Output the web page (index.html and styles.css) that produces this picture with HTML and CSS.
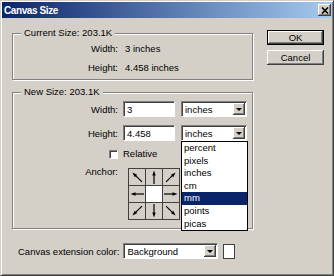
FILE: index.html
```html
<!DOCTYPE html>
<html lang="en">
<head>
  <meta charset="UTF-8" />
  <meta name="viewport" content="width=device-width, initial-scale=1.0"/>
  <title>Canvas Size</title>
  <link rel="stylesheet" href="styles.css">
</head>
<body>
  <div class="window">
    <div class="titlebar">
      <span class="title">Canvas Size</span>
      <span class="close">
        <svg width="8" height="7" viewBox="0 0 8 7"><path d="M1 0.5L7 6.5M7 0.5L1 6.5" stroke="#000" stroke-width="1.6"/></svg>
      </span>
    </div>

    <div class="content">
      <div class="left">
        <fieldset class="group current">
          <legend>Current Size: 203.1K</legend>
          <div class="row">
            <span class="label">Width:</span>
            <span>3 inches</span>
          </div>
          <div class="row">
            <span class="label">Height:</span>
            <span>4.458 inches</span>
          </div>
        </fieldset>

        <fieldset class="group new">
          <legend>New Size: 203.1K</legend>
          <div class="row first">
            <span class="label">Width:</span>
            <div class="input">3</div>
            <div class="select unit"><span>inches</span><span class="arrow"></span></div>
          </div>
          <div class="row second">
            <span class="label">Height:</span>
            <div class="input">4.458</div>
            <div class="select unit open">
              <span>inches</span><span class="arrow"></span>
              <ul class="dropdown">
                <li>percent</li>
                <li>pixels</li>
                <li>inches</li>
                <li>cm</li>
                <li class="selected">mm</li>
                <li>points</li>
                <li>picas</li>
              </ul>
            </div>
          </div>
          <div class="row relative">
            <span class="label"><span class="checkbox"></span></span>
            <span>Relative</span>
          </div>
          <div class="row anchor">
            <span class="label">Anchor:</span>
            <div class="anchor-grid">
              <div class="cell"><svg viewBox="0 0 16 16"><g transform="rotate(-45 8 8)"><path d="M8 15V5" stroke="#000" stroke-width="1.2"/><path d="M8 1.5L6.3 6.5H9.7Z"/></g></svg></div>
              <div class="cell"><svg viewBox="0 0 16 16"><path d="M8 15V5" stroke="#000" stroke-width="1.2"/><path d="M8 1.5L6.3 6.5H9.7Z"/></svg></div>
              <div class="cell"><svg viewBox="0 0 16 16"><g transform="rotate(45 8 8)"><path d="M8 15V5" stroke="#000" stroke-width="1.2"/><path d="M8 1.5L6.3 6.5H9.7Z"/></g></svg></div>
              <div class="cell"><svg viewBox="0 0 16 16"><g transform="rotate(-90 8 8)"><path d="M8 15V5" stroke="#000" stroke-width="1.2"/><path d="M8 1.5L6.3 6.5H9.7Z"/></g></svg></div>
              <div class="cell center"></div>
              <div class="cell"><svg viewBox="0 0 16 16"><g transform="rotate(90 8 8)"><path d="M8 15V5" stroke="#000" stroke-width="1.2"/><path d="M8 1.5L6.3 6.5H9.7Z"/></g></svg></div>
              <div class="cell"><svg viewBox="0 0 16 16"><g transform="rotate(-135 8 8)"><path d="M8 15V5" stroke="#000" stroke-width="1.2"/><path d="M8 1.5L6.3 6.5H9.7Z"/></g></svg></div>
              <div class="cell"><svg viewBox="0 0 16 16"><g transform="rotate(180 8 8)"><path d="M8 15V5" stroke="#000" stroke-width="1.2"/><path d="M8 1.5L6.3 6.5H9.7Z"/></g></svg></div>
              <div class="cell"><svg viewBox="0 0 16 16"><g transform="rotate(135 8 8)"><path d="M8 15V5" stroke="#000" stroke-width="1.2"/><path d="M8 1.5L6.3 6.5H9.7Z"/></g></svg></div>
            </div>
          </div>
        </fieldset>

        <div class="extension">
          <span>Canvas extension color:</span>
          <div class="select ext"><span>Background</span><span class="arrow"></span></div>
          <span class="swatch"></span>
        </div>
      </div>

      <div class="buttons">
        <button class="default">OK</button>
        <button>Cancel</button>
      </div>
    </div>
  </div>
</body>
</html>
```

FILE: styles.css
```css
body {
  margin: 0;
  font-family: "Liberation Sans", Arial, sans-serif;
  font-size: 9.5px;
  color: #000;
}

.window {
  width: 334px;
  height: 276px;
  box-sizing: border-box;
  background-color: #d4d0c8;
  border: 1px solid;
  border-color: #d4d0c8 #404040 #404040 #d4d0c8;
  padding: 1px;
  box-shadow: inset 1px 1px #fff, inset -1px -1px #808080;
}

.titlebar {
  height: 16px;
  display: flex;
  align-items: center;
  justify-content: space-between;
  padding: 0 1px 0 2px;
  background: linear-gradient(to right, #0a246a, #a6caf0);
}

.title {
  color: #fff;
  font-weight: bold;
  font-size: 10px;
  letter-spacing: -0.4px;
}

.close {
  width: 13px;
  height: 12px;
  display: flex;
  align-items: center;
  justify-content: center;
  background-color: #d4d0c8;
  box-shadow: inset -1px -1px #404040, inset 1px 1px #fff, inset -2px -2px #808080;
}

.content {
  display: flex;
  padding: 9px 0 0 10px;
}

.group {
  margin: 0;
  padding: 0 0 2px;
  width: 241px;
  box-sizing: border-box;
  border: 1px solid #808080;
  box-shadow: inset 1px 1px #fff, 1px 1px #fff;
}

.group legend {
  margin-left: 8px;
  padding: 0 3px;
  line-height: 12px;
  background-color: #d4d0c8;
}

.row {
  display: flex;
  align-items: center;
}

.row .label {
  width: 105px;
  text-align: right;
  margin-right: 5px;
  flex-shrink: 0;
}

.current .row {
  height: 19px;
}

.current .row .label {
  margin-right: 7px;
}

.new {
  margin-top: 6px;
  padding-bottom: 8px;
}

.new .first {
  margin-top: 3px;
}

.new .second {
  margin-top: 8px;
}

.new .relative {
  margin-top: 6px;
  height: 13px;
}

.new .anchor {
  margin-top: 6px;
  align-items: flex-start;
}

.anchor .label {
  line-height: 12px;
}

.input, .select {
  height: 16px;
  box-sizing: border-box;
  display: flex;
  align-items: center;
  background-color: #fff;
  border: 1px solid;
  border-color: #808080 #fff #fff #808080;
  box-shadow: inset 1px 1px #404040;
  padding-left: 3px;
}

.input {
  width: 52px;
}

.unit {
  width: 66px;
  margin-left: 6px;
}

.arrow {
  margin-left: auto;
  margin-right: 1px;
  width: 12px;
  height: 12px;
  box-sizing: border-box;
  background-color: #d4d0c8;
  box-shadow: inset -1px -1px #404040, inset 1px 1px #fff, inset -2px -2px #808080;
  display: flex;
  align-items: center;
  justify-content: center;
}

.arrow::after {
  content: "";
  border-left: 3px solid transparent;
  border-right: 3px solid transparent;
  border-top: 3px solid #000;
  margin-top: 1px;
}

.open {
  position: relative;
}

.dropdown {
  position: absolute;
  top: calc(100% + 1px);
  left: -1px;
  width: 67px;
  box-sizing: border-box;
  margin: 0;
  padding: 0;
  list-style: none;
  background-color: #fff;
  border: 1px solid #000;
  z-index: 2;
}

.dropdown li {
  height: 12.6px;
  line-height: 12.6px;
  padding-left: 2px;
}

.dropdown .selected {
  background-color: #0a246a;
  color: #fff;
}

.checkbox {
  display: inline-block;
  width: 9px;
  height: 9px;
  box-sizing: border-box;
  vertical-align: middle;
  background-color: #fff;
  border: 1px solid;
  border-color: #808080 #fff #fff #808080;
  box-shadow: inset 1px 1px #404040;
}

.anchor-grid {
  margin-top: 2px;
  margin-left: 5px;
  display: grid;
  grid-template-columns: repeat(3, 16px);
  grid-auto-rows: 16px;
  gap: 1px;
  padding: 1px;
  background-color: #404040;
}

.cell {
  background-color: #d4d0c8;
}

.cell svg {
  display: block;
  width: 16px;
  height: 16px;
}

.cell.center {
  background-color: #fff;
}

.extension {
  display: flex;
  align-items: center;
  margin-top: 14px;
  padding-left: 6px;
}

.ext {
  width: 95px;
  margin-left: 4px;
}

.swatch {
  width: 12px;
  height: 15px;
  margin-left: 5px;
  box-sizing: border-box;
  background-color: #fff;
  border: 1px solid #404040;
}

.buttons {
  display: flex;
  flex-direction: column;
  gap: 5px;
  margin: 3px 0 0 14px;
}

button {
  width: 57px;
  height: 15px;
  padding: 0;
  border: none;
  font-family: inherit;
  font-size: 9.5px;
  color: #000;
  background-color: #d4d0c8;
  box-shadow: inset -1px -1px #404040, inset 1px 1px #fff, inset -2px -2px #808080;
}

button.default {
  border: 1px solid #000;
}
```
